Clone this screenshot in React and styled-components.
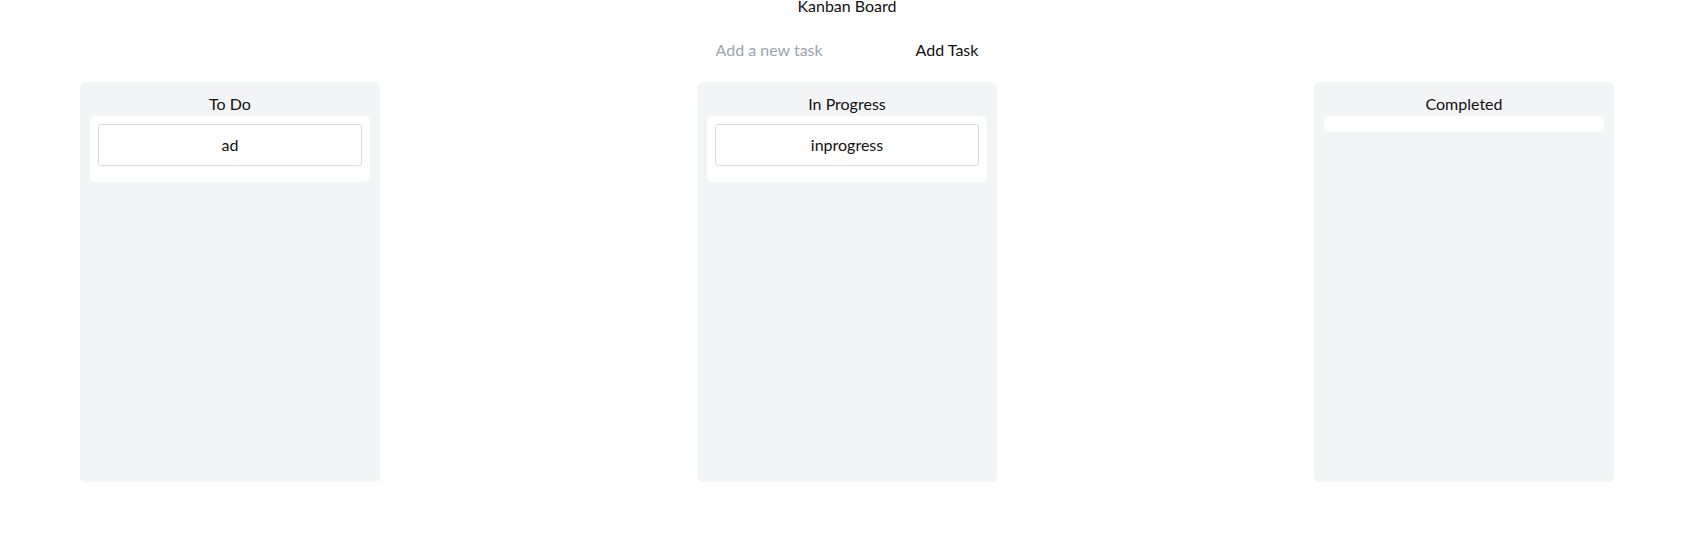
import React from "react";
import styled, { createGlobalStyle } from "styled-components";

const Global = createGlobalStyle`
  html, body { margin: 0; padding: 0; background: #fff; }
  body { font-family: Lato, "Noto Sans", sans-serif; font-size: 16px; color: #111; }
  * { box-sizing: border-box; }
`;

const Page = styled.div`
  margin: 0 94px 0 80px;
  display: flex;
  flex-direction: column;
  align-items: stretch;
`;

const Title = styled.h1`
  margin: -2px 0 0;
  font-size: 16px;
  font-weight: 400;
  line-height: 16px;
  text-align: center;
  color: #111;
`;

const AddRow = styled.form`
  display: flex;
  justify-content: center;
  align-items: center;
  margin-top: 16px;
`;

const TaskInput = styled.input`
  width: 200px;
  padding: 10px;
  border: none;
  outline: none;
  font: inherit;
  font-size: 16px;
  line-height: 19px;
  color: #111;
  background: transparent;
  &::placeholder { color: #9ca3af; }
`;

const AddButton = styled.button`
  padding: 10px;
  border: none;
  background: transparent;
  font: inherit;
  font-size: 16px;
  line-height: 19px;
  color: #111;
  cursor: pointer;
`;

const Board = styled.div`
  display: flex;
  justify-content: space-between;
  margin-top: 13px;
`;

const Column = styled.section`
  width: 300px;
  height: 400px;
  padding: 10px;
  background: #f3f4f6;
  border-radius: 6px;
`;

const ColumnTitle = styled.h2`
  margin: 0;
  font-size: 16px;
  font-weight: 400;
  line-height: 24px;
  text-align: center;
  color: #111;
`;

const DropZone = styled.div`
  padding: 8px;
  background: #fff;
  border-radius: 5px;
`;

const TaskCard = styled.div`
  padding: 10px;
  margin-bottom: 8px;
  border: 1px solid #dcdcdc;
  border-radius: 3px;
  background: #fff;
  text-align: center;
  font-size: 16px;
  line-height: 20px;
  color: #111;
`;

const columns = [
  { id: "todo", title: "To Do", tasks: ["ad"] },
  { id: "progress", title: "In Progress", tasks: ["inprogress"] },
  { id: "done", title: "Completed", tasks: [] },
];

export default function App() {
  return (
    <>
      <Global />
      <Page>
        <Title>Kanban Board</Title>
        <AddRow onSubmit={(e) => e.preventDefault()}>
          <TaskInput placeholder="Add a new task" />
          <AddButton type="submit">Add Task</AddButton>
        </AddRow>
        <Board>
          {columns.map((c) => (
            <Column key={c.id}>
              <ColumnTitle>{c.title}</ColumnTitle>
              <DropZone>
                {c.tasks.map((t) => (
                  <TaskCard key={t}>{t}</TaskCard>
                ))}
              </DropZone>
            </Column>
          ))}
        </Board>
      </Page>
    </>
  );
}
